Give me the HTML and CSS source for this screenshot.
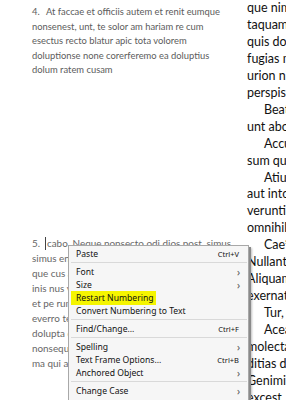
FILE: index.html
```html
<!DOCTYPE html>
<html lang="en">
<head>
    <meta charset="UTF-8">
    <meta name="viewport" content="width=device-width, initial-scale=1.0">
    <title>Layout - Restart Numbering</title>
    <link rel="stylesheet" href="styles.css">
</head>
<body>
    <div class="spread">
        <div class="frame frame-left">
            <p class="list-item">
                <span class="num">4.</span>At faccae et officiis autem et renit eumque<br>
                nonsenest, unt, te solor am hariam re cum<br>
                esectus recto blatur apic tota volorem<br>
                doluptionse none corerferemo ea doluptius<br>
                dolum ratem cusam
            </p>
            <p class="list-item item-five">
                <span class="num">5.</span><span class="caret"></span>cabo. Neque nonsecto odi dios post. simus<br>
                simus enis et pore velit aut quatur<br>
                que cus aut vel ium sedita<br>
                inis nus volore ipsum qui<br>
                et pe rum endaerum sam<br>
                everro tem faccus dolo<br>
                dolupta quatur sim vit<br>
                nonsequi con poremol<br>
                ma qui aliquis est ut
            </p>
        </div>

        <div class="frame frame-right">
            <p class="cont">que nimus<br>taquame<br>quis dolo<br>fugias mo<br>urion nis<br>perspis ea</p>
            <p>Beatur<br>unt abor</p>
            <p>Accum<br>sum quet</p>
            <p>Atium<br>aut intor<br>verunti<br>omnihil</p>
            <p>Cae<sup>s</sup><br>Nullanto r<br>Aliquam v<br>exernat</p>
            <p>Tur, s</p>
            <p>Aceat<br>molectae<br>ditias do<br>Genimin<br>excest, c</p>
        </div>
    </div>

    <div class="context-menu">
        <div class="menu-row"><span class="label">Paste</span><span class="shortcut">Ctrl+V</span></div>
        <div class="menu-sep"></div>
        <div class="menu-row"><span class="label">Font</span><span class="arrow">&rsaquo;</span></div>
        <div class="menu-row"><span class="label">Size</span><span class="arrow">&rsaquo;</span></div>
        <div class="menu-row"><span class="label marked">Restart Numbering</span></div>
        <div class="menu-row"><span class="label">Convert Numbering to Text</span></div>
        <div class="menu-sep"></div>
        <div class="menu-row"><span class="label">Find/Change...</span><span class="shortcut">Ctrl+F</span></div>
        <div class="menu-sep"></div>
        <div class="menu-row"><span class="label">Spelling</span><span class="arrow">&rsaquo;</span></div>
        <div class="menu-row"><span class="label">Text Frame Options...</span><span class="shortcut">Ctrl+B</span></div>
        <div class="menu-row"><span class="label">Anchored Object</span><span class="arrow">&rsaquo;</span></div>
        <div class="menu-sep"></div>
        <div class="menu-row"><span class="label">Change Case</span><span class="arrow">&rsaquo;</span></div>
        <div class="menu-row"><span class="label">Hide Hidden Characters</span><span class="shortcut">Alt+Ctrl+I</span></div>
    </div>
</body>
</html>
```

FILE: styles.css
```css
body {
    margin: 0;
    padding: 0;
    background: #ffffff;
    overflow: hidden;
    height: 400px;
}
.spread {
    display: flex;
    width: 400px;
}
.frame p {
    margin: 0;
}
.frame-left {
    width: 215px;
    padding: 5px 0 0 32px;
    font-family: Lato, "Liberation Sans", sans-serif;
    font-size: 9.4px;
    line-height: 14.5px;
    color: #5c5c5c;
    flex-shrink: 0;
}
.list-item .num {
    display: inline-block;
    width: 14px;
}
.item-five {
    margin-top: 158px !important;
    font-size: 9.9px;
    line-height: 15px;
    color: #666;
}
.caret {
    display: inline-block;
    width: 1px;
    height: 13px;
    margin: 0 1px -3px -1px;
    background: #444;
}
.frame-right {
    width: 140px;
    font-family: Lato, "Liberation Sans", sans-serif;
    font-size: 12.5px;
    line-height: 16.95px;
    color: #111;
    flex-shrink: 0;
}
.frame-right p {
    text-indent: 17px;
}
.frame-right p.cont {
    text-indent: 0;
}
.frame-right sup {
    font-size: 8px;
    line-height: 0;
}
.context-menu {
    position: absolute;
    left: 68px;
    top: 245px;
    width: 179px;
    height: 170px;
    padding-top: 1px;
    background: #f6f6f6;
    border: 1px solid #a8a8a8;
    box-shadow: 2px 2px 0 #8a8a8a, 3px 3px 2px rgba(0, 0, 0, 0.25);
    font-family: "Noto Sans", "Open Sans", sans-serif;
    font-size: 8.6px;
    color: #111;
}
.menu-row {
    display: flex;
    align-items: center;
    justify-content: space-between;
    height: 13px;
    padding: 0 9px 0 7px;
}
.label.marked {
    background: #f5f500;
    margin-left: -5px;
    padding: 1px 2px 1px 5px;
}
.shortcut {
    font-size: 7.5px;
}
.arrow {
    font-size: 10px;
    color: #555;
    margin-right: -1px;
}
.menu-sep {
    height: 1px;
    margin: 2px 1px 2px 2px;
    background: #d9d9d9;
}
```
